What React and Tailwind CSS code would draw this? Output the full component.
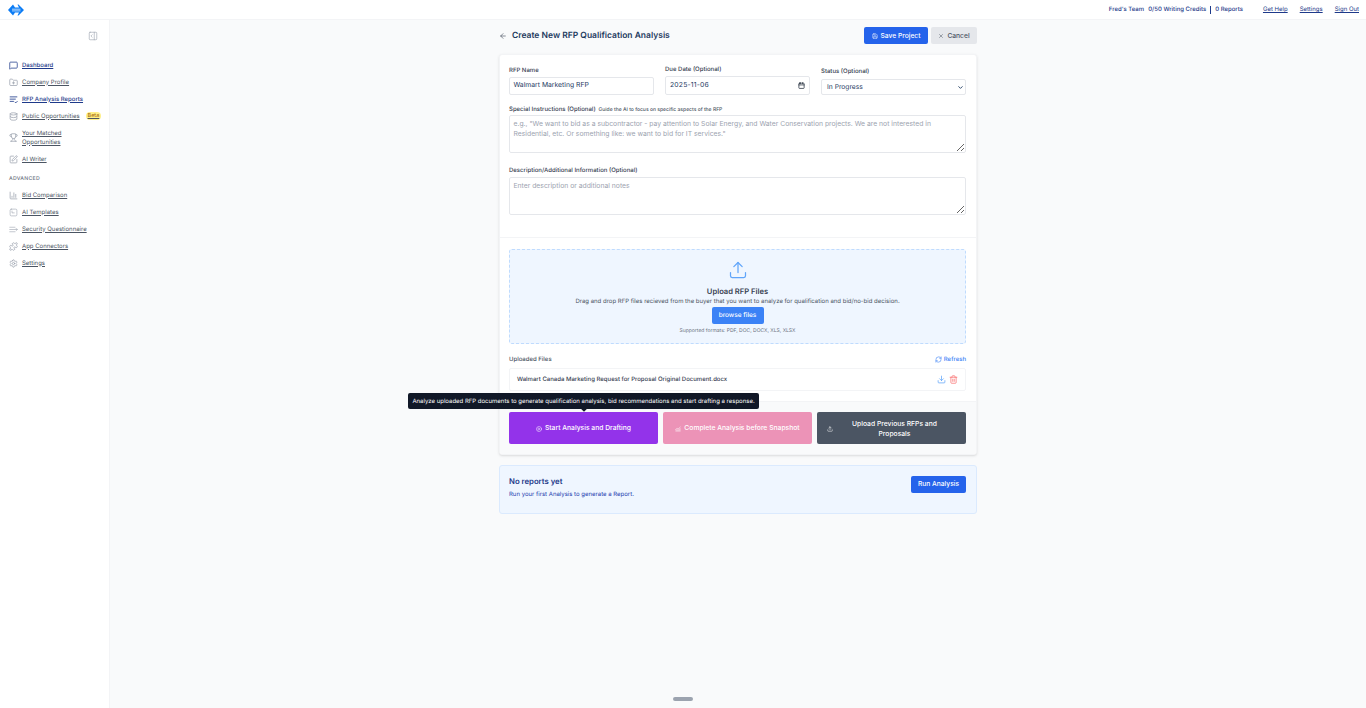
import {
  ArrowLeft, ChartColumn, CirclePlay, Database, Download, FolderPlus, Puzzle, RefreshCw, Save,
  Settings, SquarePen, Trash2, Trophy, Upload, X, PanelRightOpen, MessageSquare,
  ChartNoAxesCombined, Calendar, ChevronDown,
} from 'lucide-react';

function ReportsIcon(props) {
  return (
    <svg viewBox="0 0 24 24" fill="none" stroke="currentColor" strokeWidth="2.2" strokeLinecap="round" strokeLinejoin="round" {...props}>
      <path d="M3 5h18M3 11h14M3 17h9" />
      <path d="M16 19l2 2 4-4" />
    </svg>
  );
}

function TemplatesIcon(props) {
  return (
    <svg viewBox="0 0 24 24" fill="none" stroke="currentColor" strokeWidth="1.6" strokeLinecap="round" strokeLinejoin="round" {...props}>
      <rect x="3" y="3" width="18" height="18" rx="3" />
      <path d="M8 8v5h6" />
    </svg>
  );
}

function SecurityIcon(props) {
  return (
    <svg viewBox="0 0 24 24" fill="none" stroke="currentColor" strokeWidth="1.6" strokeLinecap="round" strokeLinejoin="round" {...props}>
      <path d="M2 6h14M2 12h10M2 18h14" />
      <path d="M14 12h8M19 9l3 3-3 3" />
    </svg>
  );
}

const mainNav = [
  { label: 'Dashboard', icon: MessageSquare, active: true },
  { label: 'Company Profile', icon: FolderPlus },
  { label: 'RFP Analysis Reports', icon: ReportsIcon, active: true },
  { label: 'Public Opportunities', icon: Database, beta: true },
  { label: 'Your Matched Opportunities', icon: Trophy, wrap: true },
  { label: 'AI Writer', icon: SquarePen },
];

const advancedNav = [
  { label: 'Bid Comparison', icon: ChartColumn },
  { label: 'AI Templates', icon: TemplatesIcon },
  { label: 'Security Questionnaire', icon: SecurityIcon },
  { label: 'App Connectors', icon: Puzzle },
  { label: 'Settings', icon: Settings },
];

function NavItem({ item }) {
  const Icon = item.icon;
  return (
    <a className={`flex items-center gap-[4px] pl-[9px] py-[4px] text-[6px] leading-[9px] underline ${item.active ? 'text-[#1e3a8a] font-medium' : 'text-[#4b5563]'}`}>
      <Icon className={`w-[9px] h-[9px] shrink-0 ${item.active ? 'text-[#1e3a8a]' : 'text-[#9ca3af]'}`} />
      <span className={item.wrap ? 'w-[44px]' : 'whitespace-nowrap'}>{item.label}</span>
      {item.beta && <span className="ml-[2px] rounded-sm bg-[#fef08a] px-[2px] text-[5.5px] leading-[8px] text-[#a16207]">Beta</span>}
    </a>
  );
}

function Label({ children, className = '' }) {
  return <label className={`block text-[6px] leading-[9px] font-medium text-[#374151] ${className}`}>{children}</label>;
}

export default function App() {
  return (
    <div className="h-[708px] w-[1366px] overflow-hidden bg-[#f9fafb] flex flex-col relative [text-rendering:geometricPrecision]" style={{ fontFamily: 'Inter, sans-serif' }}>
      <header className="h-[20px] shrink-0 bg-white border-b border-[#f3f4f6] flex items-center justify-between pl-[8px] pr-[7px]">
        <svg viewBox="0 0 16 12" className="w-[16px] h-[12px]">
          <path d="M5 0.5 L0 6 L5 11.5 L7 8.5 L11 8.5 L9.5 11.5 L10.5 11.5 L16 6 L10.5 0.5 L9.5 0.5 L11 3.5 L7 3.5 Z" fill="#0b7cf5" />
          <path d="M4 5.2 H12.5 M4 6.9 H12.5" stroke="#ffffff" strokeWidth="0.7" />
        </svg>
        <div className="flex items-center text-[6px] text-[#1e3a8a]">
          <span className="font-medium">Fred's Team</span>
          <span className="ml-[4px] font-medium">0/50 Writing Credits</span>
          <span className="mx-[4px] h-[8px] w-px bg-[#1e3a8a]" />
          <span className="font-medium">0 Reports</span>
          <a className="ml-[20px] underline">Get Help</a>
          <a className="ml-[12px] underline">Settings</a>
          <a className="ml-[12px] underline">Sign Out</a>
        </div>
      </header>

      <div className="flex flex-1 min-h-0">
        <aside className="w-[110px] shrink-0 bg-white border-r border-[#f3f4f6] flex flex-col">
          <div className="flex justify-end pr-[11px] pt-[11px]">
            <PanelRightOpen className="w-[10px] h-[10px] text-[#9ca3af]" strokeWidth={1.5} />
          </div>
          <nav className="mt-[15.5px] flex flex-col">
            {mainNav.map((item) => <NavItem key={item.label} item={item} />)}
          </nav>
          <div className="mt-[7px] mb-[4px] px-[9px] text-[5.2px] leading-[8px] font-medium tracking-wider text-[#6b7280]">ADVANCED</div>
          <nav className="flex flex-col">
            {advancedNav.map((item) => <NavItem key={item.label} item={item} />)}
          </nav>
        </aside>

        <main className="flex-1 flex justify-center">
          <div className="w-[478px] pt-[7px]">
            <div className="flex items-center justify-between h-[17px]">
              <div className="flex items-center gap-[5px]">
                <ArrowLeft className="w-[8px] h-[8px] text-[#4b5563]" />
                <h1 className="mt-[2px] text-[8.5px] font-semibold text-[#1e3a5f]">Create New RFP Qualification Analysis</h1>
              </div>
              <div className="flex gap-[3px]">
                <button className="h-[17px] w-[64px] pt-[1px] rounded-[2px] bg-[#2563eb] text-white text-[6.7px] font-medium flex items-center justify-center gap-[3px]">
                  <Save className="w-[6px] h-[6px]" />Save Project
                </button>
                <button className="h-[17px] w-[46px] pt-[1px] rounded-[2px] bg-[#e5e7eb] text-[#4b5563] text-[6.7px] font-medium flex items-center justify-center gap-[3px]">
                  <X className="w-[6px] h-[6px]" />Cancel
                </button>
              </div>
            </div>

            <section className="mt-[10px] bg-white rounded-[3px] border border-[#f3f4f6] shadow-sm overflow-hidden">
              <div className="pl-[9px] pr-[10px] pt-[9.5px] pb-[22px] border-b border-[#f3f4f6]">
                <div className="grid grid-cols-3 gap-[11px] items-end">
                  <div>
                    <Label>RFP Name</Label>
                    <div className="mt-[2px] h-[18px] rounded-[2px] border border-[#e5e7eb] px-[3.5px] flex items-center text-[6.8px] text-[#1e3a5f]">Walmart Marketing RFP</div>
                  </div>
                  <div>
                    <Label>Due Date (Optional)</Label>
                    <div className="mt-[2px] h-[19px] rounded-[2px] border border-[#e5e7eb] px-[4px] flex items-center justify-between text-[6.8px] tracking-[0.2px] text-[#1e3a5f]">
                      2025-11-06
                      <Calendar className="w-[7px] h-[7px] text-[#1f2937]" strokeWidth={2.5} />
                    </div>
                  </div>
                  <div>
                    <Label>Status (Optional)</Label>
                    <div className="mt-[3px] h-[16px] pt-[1px] rounded-[2px] border border-[#e5e7eb] pl-[5px] pr-[1px] flex items-center justify-between text-[6.7px] text-[#1e3a5f]">
                      In Progress
                      <ChevronDown className="w-[7px] h-[7px] text-[#1e3a5f]" strokeWidth={3} />
                    </div>
                  </div>
                </div>

                <div className="mt-[10px] flex items-baseline gap-[3px]">
                  <Label>Special Instructions (Optional)</Label>
                  <span className="text-[5px] font-medium text-[#4b5563]">Guide the AI to focus on specific aspects of the RFP</span>
                </div>
                <textarea
                  className="block w-full mt-[1px] h-[38px] rounded-[2px] border border-[#e5e7eb] px-[3.5px] py-[3px] text-[6.8px] leading-[10px] placeholder:text-[#9ca3af] resize-y"
                  placeholder={'e.g., "We want to bid as a subcontractor - pay attention to Solar Energy, and Water Conservation projects. We are not interested in Residential, etc. Or something like: we want to bid for IT services."'}
                />

                <Label className="mt-[13px]">Description/Additional Information (Optional)</Label>
                <textarea
                  className="block w-full mt-[2px] h-[38px] rounded-[2px] border border-[#e5e7eb] px-[3.5px] py-[3px] text-[6.8px] leading-[10px] placeholder:text-[#9ca3af] resize-y"
                  placeholder="Enter description or additional notes"
                />
              </div>

              <div className="pl-[9px] pr-[10px] pt-[11px] pb-[10.5px] border-b border-[#f3f4f6]">
                <div className="h-[95px] rounded-[3px] border border-dashed border-[#bfdbfe] bg-[#eff6ff] flex flex-col items-center pt-[10px]">
                  <Upload className="w-[20px] h-[20px] text-[#60a5fa]" strokeWidth={1.5} />
                  <div className="mt-[6px] text-[7.6px] leading-[11px] font-semibold text-[#374151]">Upload RFP Files</div>
                  <div className="text-[6px] leading-[9px] text-[#4b5563]">Drag and drop RFP files recieved from the buyer that you want to analyze for qualification and bid/no-bid decision.</div>
                  <div className="mt-[1px] h-[17px] w-[52px] rounded-[2px] bg-[#3b82f6] text-white text-[6.5px] font-medium flex items-center justify-center">browse files</div>
                  <div className="mt-[4px] text-[5px] leading-[7px] text-[#6b7280]">Supported formats: PDF, DOC, DOCX, XLS, XLSX</div>
                </div>
                <div className="mt-[11px] flex items-center justify-between">
                  <span className="text-[6px] font-medium text-[#4b5563]">Uploaded Files</span>
                  <span className="flex items-center gap-[2px] text-[6px] font-medium text-[#3b82f6]">
                    <RefreshCw className="w-[7px] h-[7px]" />Refresh
                  </span>
                </div>
                <div className="mt-[3.5px] h-[23px] rounded-[2px] border border-[#f3f4f6] pl-[7px] pr-[7px] flex items-center justify-between">
                  <span className="text-[6px] font-medium text-[#374151]">Walmart Canada Marketing Request for Proposal Original Document.docx</span>
                  <span className="flex items-center gap-[3px]">
                    <Download className="w-[9px] h-[9px] text-[#60a5fa]" />
                    <Trash2 className="w-[9px] h-[9px] text-[#f87171]" />
                  </span>
                </div>
              </div>

              <div className="bg-[#f9fafb] pl-[9px] pr-[10px] pt-[10px] pb-[10px] grid grid-cols-3 gap-[5px]">
                <button className="h-[32px] pt-[1px] rounded-[2px] bg-[#9333ea] text-white text-[6.75px] font-medium flex items-center justify-center gap-[3px]">
                  <CirclePlay className="w-[6px] h-[6px]" />Start Analysis and Drafting
                </button>
                <button className="h-[32px] pt-[1px] rounded-[2px] bg-[#ec93b7] text-white text-[6.75px] font-medium flex items-center justify-center gap-[3px]">
                  <ChartNoAxesCombined className="w-[6px] h-[6px]" />Complete Analysis before Snapshot
                </button>
                <button className="h-[32px] pt-[1px] rounded-[2px] bg-[#4b5563] text-white text-[6.75px] leading-[10px] font-medium flex items-center px-[10px]">
                  <Upload className="w-[6px] h-[6px] shrink-0" />
                  <span className="flex-1 text-center px-[6px]">Upload Previous RFPs and Proposals</span>
                </button>
              </div>
            </section>

            <section className="mt-[10px] h-[49px] rounded-[3px] border border-[#dbeafe] bg-[#eff6ff] pl-[9px] pr-[10px] pt-[9.5px] flex items-start justify-between">
              <div>
                <div className="text-[7.75px] leading-[11px] font-semibold text-[#1e3a8a]">No reports yet</div>
                <div className="mt-[3px] text-[6px] leading-[9px] text-[#1e40af]">Run your first Analysis to generate a Report.</div>
              </div>
              <button className="h-[17px] w-[55px] pt-[1px] rounded-[2px] bg-[#2563eb] text-white text-[6.7px] font-medium">Run Analysis</button>
            </section>
          </div>
        </main>
      </div>

      {/* tooltip over the start button */}
      <div className="absolute left-[408px] top-[393px] h-[16px] w-[351px] pt-[1px] rounded-[2px] bg-[#111827] text-white text-[6px] flex items-center justify-center whitespace-nowrap">
        Analyze uploaded RFP documents to generate qualification analysis, bid recommendations and start drafting a response.
        <span className="absolute left-[174px] bottom-[-2px] w-[4px] h-[4px] rotate-45 bg-[#111827]" />
      </div>

      <div className="absolute left-[673px] top-[697px] h-[4px] w-[20px] rounded-full bg-[#9ca3af]" />
    </div>
  );
}
